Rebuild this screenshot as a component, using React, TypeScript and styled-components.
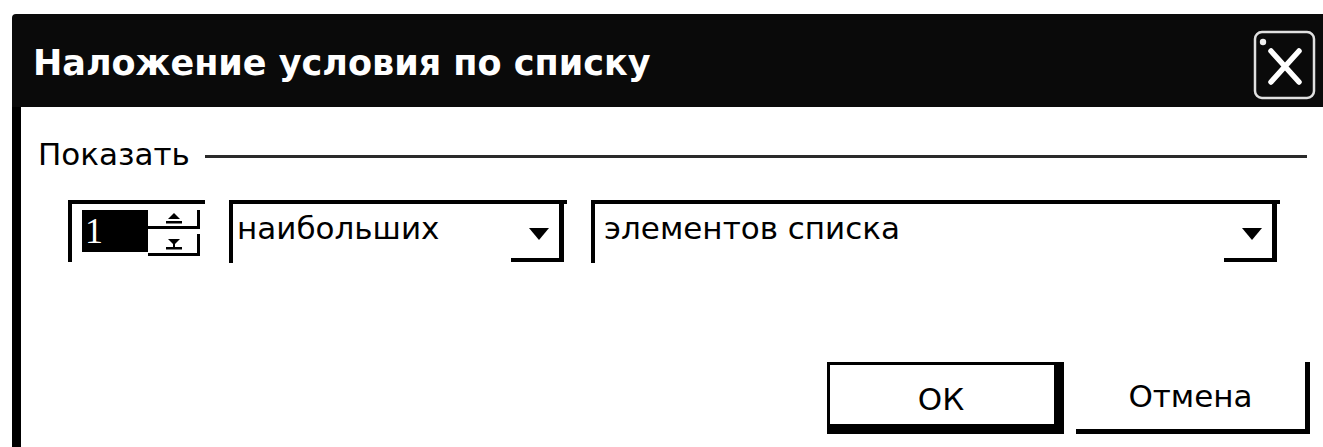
import { createGlobalStyle } from 'styled-components';
import styled from 'styled-components';

const GlobalStyle = createGlobalStyle`
  html, body {
    margin: 0;
    padding: 0;
    background: #fff;
    overflow: hidden;
  }
  body {
    font-family: "DejaVu Sans", "Liberation Sans", Arial, sans-serif;
    color: #000;
  }
`;

const Window = styled.div`
  margin: 14px 0 0 12px;
  width: 1311px;
  height: 460px;
  display: flex;
  flex-direction: column;
`;

const TitleBar = styled.div`
  height: 93px;
  background: #0a0a0a;
  border-top-left-radius: 4px;
  display: flex;
  align-items: center;
  justify-content: space-between;
  padding: 0 7px 0 21px;
`;

const Title = styled.span`
  color: #fff;
  font-weight: bold;
  font-size: 35px;
  line-height: 38px;
  padding-top: 4px;
`;

const CloseButton = styled.button`
  width: 63px;
  height: 70px;
  margin-top: 9px;
  padding: 0;
  border: 0;
  background: transparent;
  display: block;
`;

const Body = styled.div`
  flex: 1;
  border-left: 9px solid #000;
  padding: 31px 13px 0 17px;
  display: flex;
  flex-direction: column;
`;

const GroupHeader = styled.div`
  height: 32px;
  display: flex;
  align-items: center;
  gap: 15px;
`;

const GroupLabel = styled.span`
  font-size: 31px;
  line-height: 32px;
`;

const GroupLine = styled.div`
  flex: 1;
  height: 3px;
  margin: 4px 3px 0 0;
  background: #2a2a2a;
`;

const ControlsRow = styled.div`
  margin-top: 30px;
  padding-left: 30px;
  display: flex;
  gap: 24px;
`;

const Spinner = styled.div`
  width: 137px;
  height: 62px;
  box-sizing: border-box;
  border-top: 4px solid #000;
  border-left: 4px solid #000;
  padding: 6px 5px 0 10px;
  display: flex;
`;

const SpinValue = styled.div`
  width: 66px;
  height: 42px;
  background: #000;
  color: #fff;
  font-family: "Liberation Serif", "Times New Roman", serif;
  font-size: 36px;
  line-height: 42px;
  padding-left: 3px;
  box-sizing: border-box;
`;

const SpinButtons = styled.div`
  flex: 1;
  display: flex;
  flex-direction: column;
`;

type SpinButtonProps = {
  $h: number;
  $gap?: number;
};

const SpinButton = styled.div<SpinButtonProps>`
  height: ${({ $h }) => $h}px;
  margin-top: ${({ $gap }) => $gap || 0}px;
  box-sizing: border-box;
  border-right: 3px solid #000;
  border-bottom: 3px solid #000;
  display: flex;
  align-items: center;
  justify-content: center;
  padding-left: 2px;
`;

type ComboProps = {
  $w: number;
  $indent?: number;
};

const Combo = styled.div<ComboProps>`
  width: ${({ $w }) => $w}px;
  height: 63px;
  box-sizing: border-box;
  border-top: 4px solid #000;
  border-left: 4px solid #000;
  padding-left: ${({ $indent }) => $indent || 4}px;
  padding-right: 3px;
  display: flex;
`;

const ComboText = styled.span`
  flex: 1;
  font-size: 31px;
  line-height: 32px;
  padding-top: 8px;
  white-space: nowrap;
`;

const DropButton = styled.div`
  width: 53px;
  height: 58px;
  box-sizing: border-box;
  border-right: 5px solid #000;
  border-bottom: 4px solid #000;
  display: flex;
  align-items: center;
  justify-content: center;
  padding: 6px 0 0 8px;
`;

const ButtonRow = styled.div`
  margin-top: 99px;
  display: flex;
  justify-content: flex-end;
  gap: 12px;
`;

type DialogButtonProps = {
  $default?: boolean;
};

const DialogButton = styled.button<DialogButtonProps>`
  width: ${({ $default }) => ($default ? 237 : 234)}px;
  height: 72px;
  box-sizing: border-box;
  background: #fff;
  color: #000;
  font-family: "DejaVu Sans", "Liberation Sans", Arial, sans-serif;
  font-size: 31px;
  line-height: 32px;
  padding: ${({ $default }) => ($default ? '4px 7px 0 0' : '0')};
  border: ${({ $default }) => ($default ? '3px solid #000' : '0')};
  border-right: 5px solid #000;
  border-bottom: 5px solid #000;
  box-shadow: ${({ $default }) => ($default ? 'inset -5px -5px 0 #000' : 'none')};
`;

const CloseIcon = () => (
  <svg width="63" height="70" viewBox="0 0 63 70">
    <rect x="2" y="2" width="59" height="66" rx="7" fill="none" stroke="#e0e0e0" strokeWidth="2.5" />
    <circle cx="10" cy="12" r="3.2" fill="#f0f0f0" />
    <path d="M18 21 L46 52 M46 21 L18 52" stroke="#fff" strokeWidth="5.5" strokeLinecap="round" />
  </svg>
);

const DownArrow = () => (
  <svg width="22" height="14" viewBox="0 0 22 14">
    <path d="M1 1 H21 L11 13 Z" fill="#000" />
  </svg>
);

const SpinUp = () => (
  <svg width="18" height="12" viewBox="0 0 18 12">
    <path d="M9 1 L15 7 H3 Z" fill="#000" />
    <rect x="1" y="9" width="16" height="2.5" fill="#000" />
  </svg>
);

const SpinDown = () => (
  <svg width="18" height="14" viewBox="0 0 18 14">
    <path d="M3 2 H15 L9 8 Z" fill="#000" />
    <rect x="8" y="6" width="2" height="5" fill="#000" />
    <rect x="1" y="10" width="16" height="2.5" fill="#000" />
  </svg>
);

const App = () => {
  return (
    <>
      <GlobalStyle />
      <Window>
        <TitleBar>
          <Title>Наложение условия по списку</Title>
          <CloseButton aria-label="Закрыть">
            <CloseIcon />
          </CloseButton>
        </TitleBar>
        <Body>
          <GroupHeader>
            <GroupLabel>Показать</GroupLabel>
            <GroupLine />
          </GroupHeader>

          <ControlsRow>
            <Spinner>
              <SpinValue>1</SpinValue>
              <SpinButtons>
                <SpinButton $h={19}>
                  <SpinUp />
                </SpinButton>
                <SpinButton $h={22} $gap={5}>
                  <SpinDown />
                </SpinButton>
              </SpinButtons>
            </Spinner>

            <Combo $w={338}>
              <ComboText>наибольших</ComboText>
              <DropButton>
                <DownArrow />
              </DropButton>
            </Combo>

            <Combo $w={689} $indent={9}>
              <ComboText>элементов списка</ComboText>
              <DropButton>
                <DownArrow />
              </DropButton>
            </Combo>
          </ControlsRow>

          <ButtonRow>
            <DialogButton $default>ОК</DialogButton>
            <DialogButton>Отмена</DialogButton>
          </ButtonRow>
        </Body>
      </Window>
    </>
  );
};

export default App;
